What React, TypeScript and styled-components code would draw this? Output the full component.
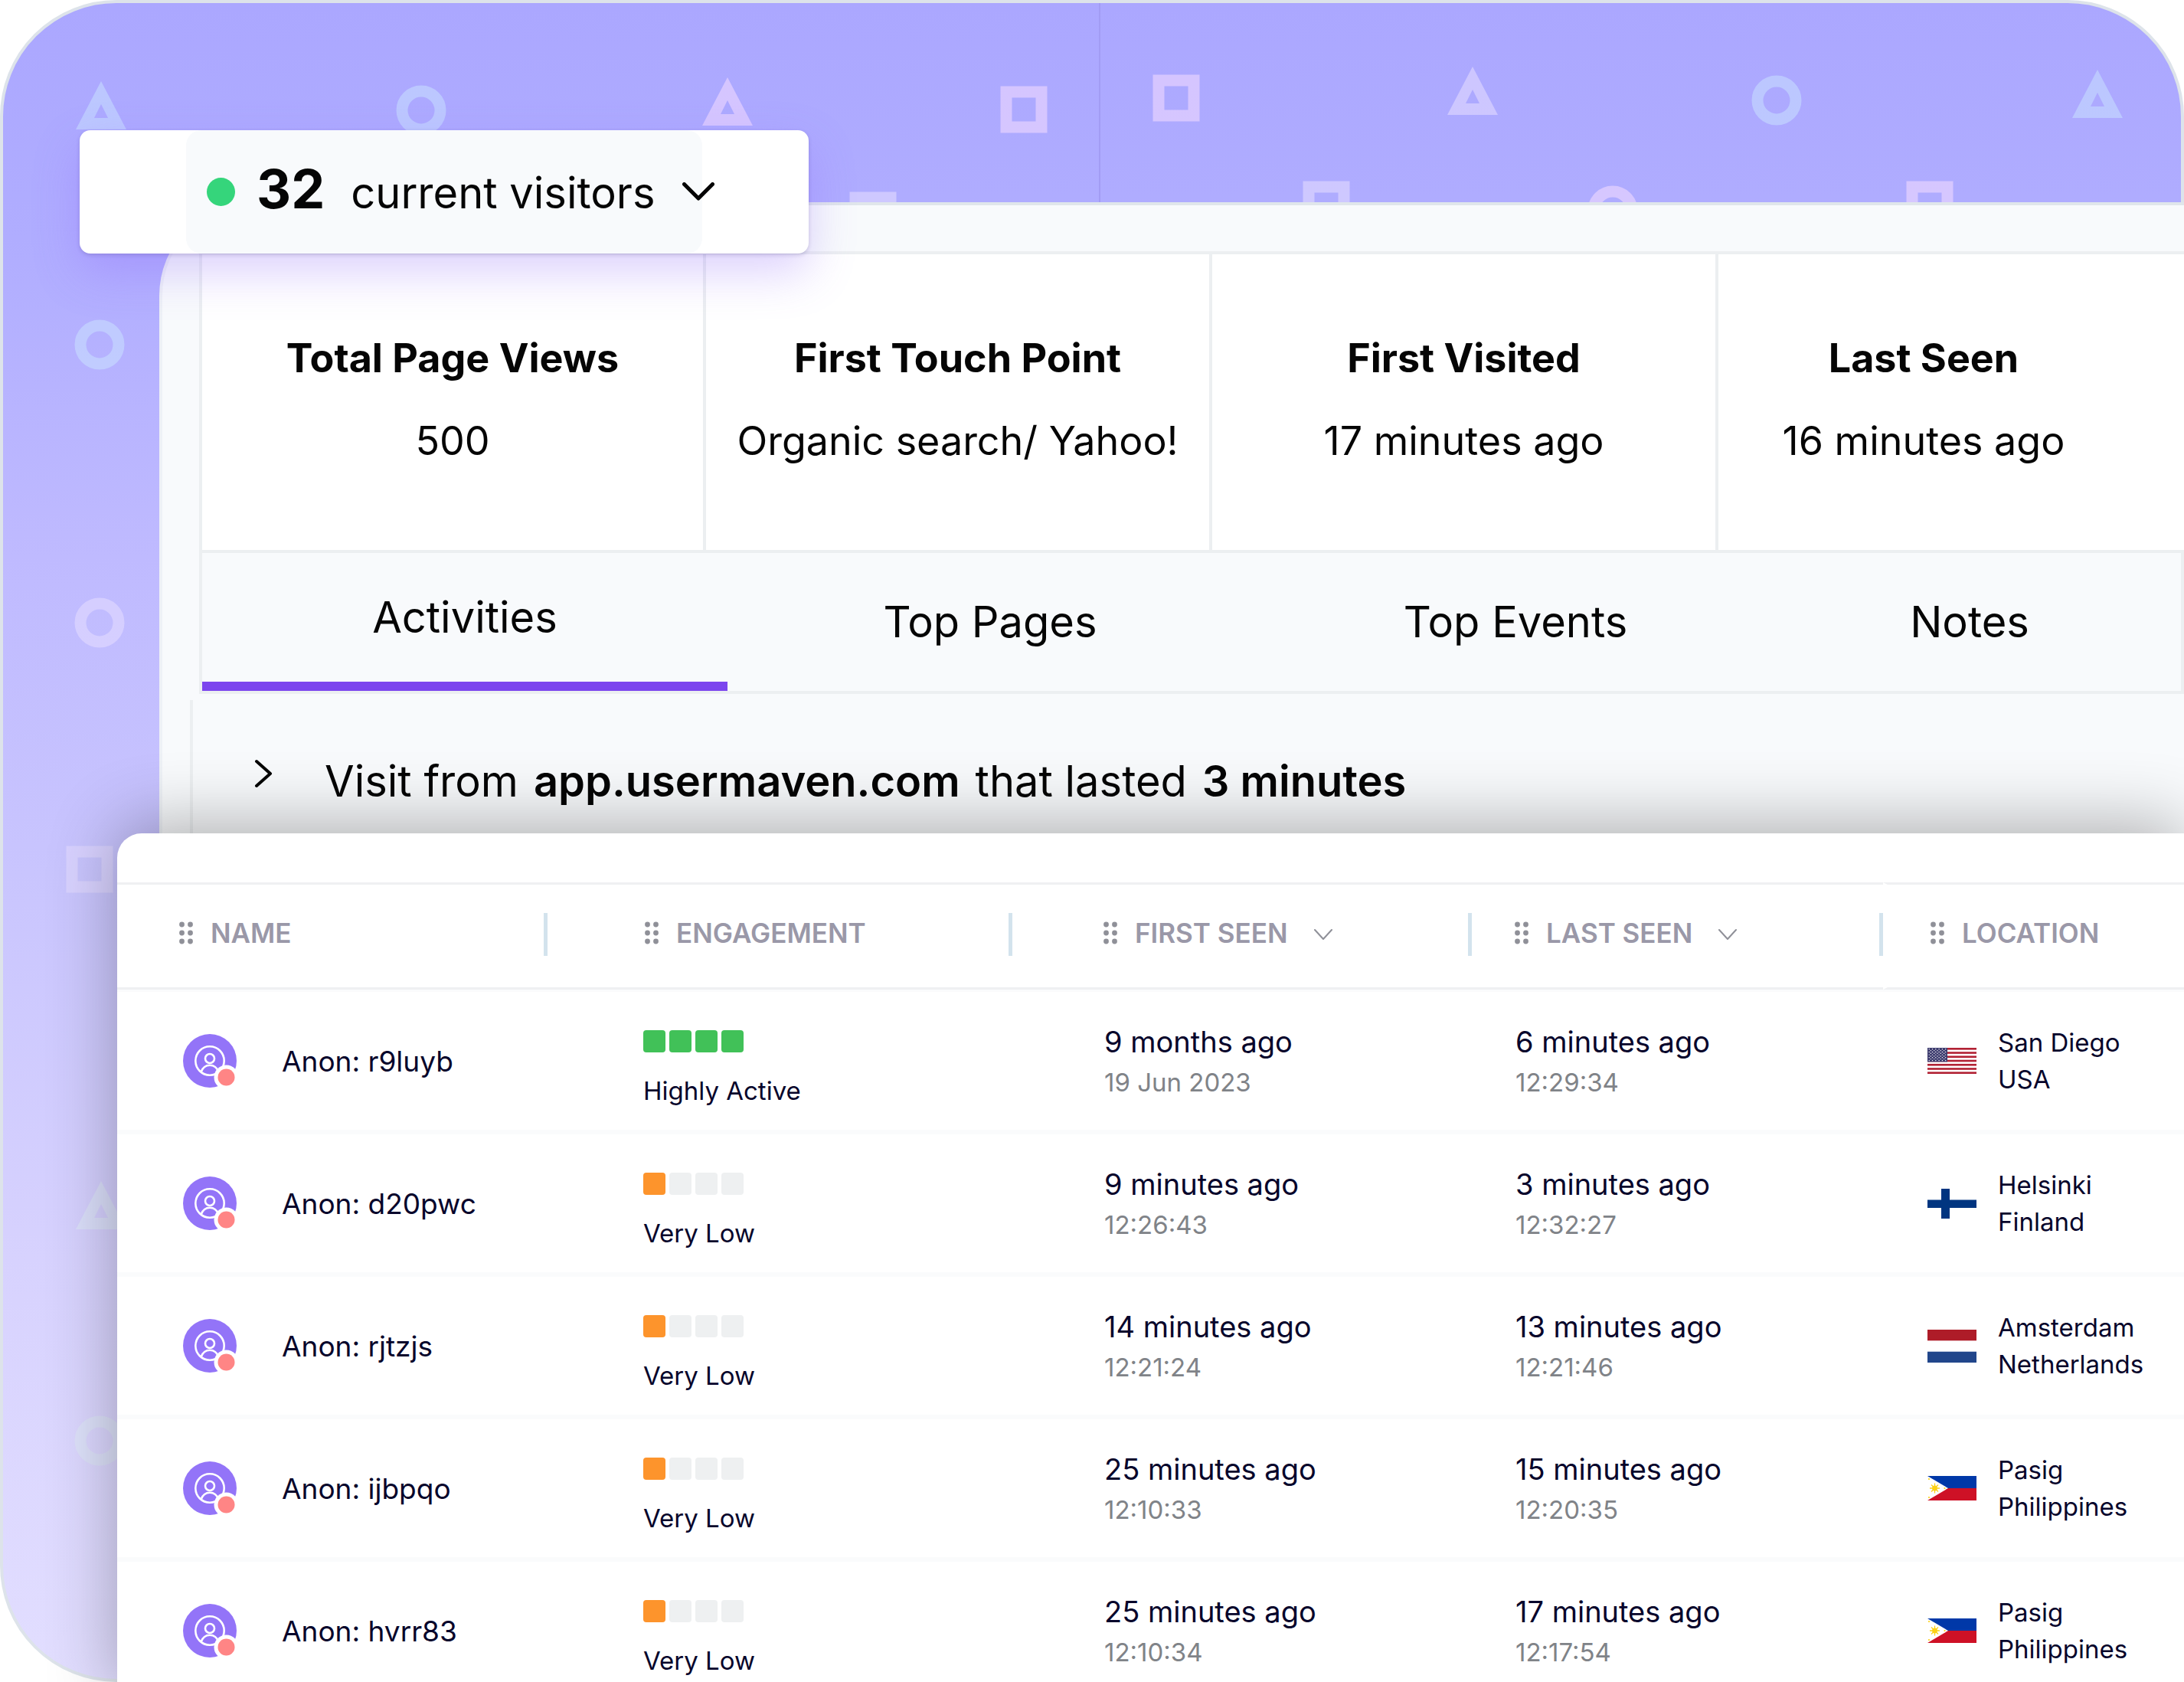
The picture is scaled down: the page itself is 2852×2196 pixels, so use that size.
import React from "react";
import styled, { createGlobalStyle, css } from "styled-components";

const GlobalStyle = createGlobalStyle`
  *, *::before, *::after { box-sizing: border-box; }
  body {
    margin: 0;
    background: #ffffff;
    color: #050505;
    font-family: Inter, "Liberation Sans", sans-serif;
    font-optical-sizing: none;
  }
  button { font: inherit; color: inherit; border: 0; background: none; padding: 0; cursor: pointer; }
`;

/* ---------- stage ---------- */

const Stage = styled.main`
  position: relative;
  display: flex;
  flex-direction: column;
  height: 100vh;
  overflow: hidden;
`;

const Backdrop = styled.div`
  position: absolute;
  inset: 0;
  overflow: hidden;
  border: 4px solid #dde3ea;
  border-radius: 152px 152px 0 152px;
  background: linear-gradient(180deg, #aba7ff 0%, #b0adff 14%, #bfbaff 33%, #c9c5fe 52%, #d7d2fe 75%, #e2deff 100%);
`;

const Pattern = styled.svg`
  position: absolute;
  top: -4px;
  left: -4px;
  width: 2852px;
  height: 2196px;
`;

const BLUE = "rgba(204, 229, 255, 0.5)";
const PINK = "rgba(240, 217, 255, 0.6)";
const LILAC = "rgba(226, 219, 255, 0.6)";
const MIST = "rgba(222, 232, 246, 0.6)";

type ShapeProps = { x: number; y: number; fill: string };

const Triangle = ({ x, y, fill }: ShapeProps) => (
  <path
    transform={`translate(${x} ${y})`}
    fill={fill}
    fillRule="evenodd"
    d="M0-32 33 31H-33ZM0-2-9 16H9Z"
  />
);
const Ring = ({ x, y, fill }: ShapeProps) => (
  <circle cx={x} cy={y} r="25" fill="none" stroke={fill} strokeWidth="15" />
);
const Square = ({ x, y, fill }: ShapeProps) => (
  <rect x={x - 23} y={y - 23} width="46" height="46" fill="none" stroke={fill} strokeWidth="15" />
);

const BackdropPattern = () => (
  <Pattern viewBox="0 0 2852 2196" aria-hidden="true">
    <path d="M1436 0V270" stroke="#a29cf4" strokeWidth="2" />
    <Triangle x={132} y={138} fill={BLUE} />
    <Ring x={550} y={144} fill={BLUE} />
    <Triangle x={950} y={133} fill={PINK} />
    <Square x={1337} y={143} fill={PINK} />
    <Square x={1536} y={128} fill={PINK} />
    <Triangle x={1923} y={119} fill={LILAC} />
    <Ring x={2320} y={131} fill={BLUE} />
    <Triangle x={2739} y={123} fill={BLUE} />
    <Square x={1140} y={281} fill={LILAC} />
    <Square x={1732} y={267} fill={LILAC} />
    <Ring x={2106} y={275} fill={PINK} />
    <Square x={2520} y={267} fill={PINK} />
    <Ring x={130} y={450} fill={BLUE} />
    <Ring x={130} y={813} fill={LILAC} />
    <Square x={117} y={1135} fill={LILAC} />
    <Triangle x={132} y={1574} fill={MIST} />
    <Ring x={130} y={1881} fill={MIST} />
  </Pattern>
);

/* ---------- current visitors ---------- */

const VisitorsButton = styled.button`
  && {
    position: absolute;
    top: 170px;
    left: 104px;
    z-index: 2;
    display: flex;
    align-items: center;
    width: 952px;
    height: 161px;
    padding-left: 166px;
    border-radius: 14px;
    background: #ffffff;
    box-shadow: 0 2px 5px rgba(60, 50, 110, 0.2), 0 24px 60px rgba(140, 100, 250, 0.3);
  }
  &::before {
    content: "";
    position: absolute;
    inset: 0 139px;
    border-radius: 20px;
    background: #f8fafc;
  }
  > * { position: relative; }
`;

const LiveDot = styled.span`
  width: 37px;
  height: 37px;
  margin-right: 28px;
  border-radius: 50%;
  background: #35d57b;
`;

const VisitorsText = styled.span`
  display: flex;
  align-items: baseline;
  gap: 34px;
  margin-right: 36px;
  font-size: 56px;
  line-height: 80px;
  padding-bottom: 2px;
  white-space: nowrap;
  strong { font-size: 70px; font-weight: 700; }
`;

/* ---------- visitor profile ---------- */

const ProfilePanel = styled.section`
  position: relative;
  margin: 264px 0 0 208px;
  padding: 60px 0 0 36px;
  border: solid #e0e6eb;
  border-width: 4px 0 0 4px;
  border-left-color: #eef1f6;
  border-radius: 122px 0 0 0;
  background: #f8fafc;
`;

const line = "4px solid #eceff1";

const Stats = styled.dl`
  display: grid;
  grid-template-columns: 658fr 661fr 661fr 612fr;
  margin: 0 0 0 12px;
  border-top: ${line};
  border-bottom: ${line};
  background: #ffffff;
`;

const Stat = styled.div`
  display: flex;
  flex-direction: column;
  align-items: center;
  gap: 44px;
  padding: 104px 0 110px;
  border-left: ${line};
  text-align: center;
  &:last-child { padding-right: 72px; }
`;

const StatTitle = styled.dt`
  font-size: 52px;
  font-weight: 700;
  line-height: 64px;
  white-space: nowrap;
`;

const StatValue = styled.dd`
  margin: 0;
  font-size: 52px;
  line-height: 64px;
  white-space: nowrap;
`;

const Tabs = styled.div`
  display: grid;
  grid-template-columns: 686fr 686fr 686fr 500fr;
  margin: 0 0 8px 12px;
  padding-right: 26px;
  border: ${line};
  border-top: 0;
`;

const Tab = styled.button<{ $active?: boolean }>`
  && {
    height: 180px;
    font-size: 56px;
    ${(p) => p.$active && css`border-bottom: 12px solid #7c45ee;`}
  }
`;

const Session = styled.div`
  display: flex;
  align-items: flex-start;
  gap: 58px;
  padding: 74px 0 36px 70px;
  border-left: ${line};
`;

const SessionToggle = styled.button`
  width: 44px;
  height: 44px;
  svg { display: block; }
`;

const SessionText = styled.p`
  display: flex;
  gap: 20px;
  margin: 0;
  font-size: 56px;
  line-height: 64px;
  white-space: nowrap;
  strong { font-weight: 600; }
`;

/* ---------- visitors table ---------- */

const TablePanel = styled.section`
  position: relative;
  flex: none;
  margin-left: 153px;
  padding-top: 64px;
  border-radius: 32px 0 0 0;
  background: #ffffff;
  box-shadow: 0 -12px 90px rgba(0, 0, 0, 0.3);
`;

const Table = styled.table`
  width: 100%;
  table-layout: fixed;
  border-collapse: separate;
  border-spacing: 0;
  color: #07052b;
  text-align: left;
`;

const HeadCell = styled.th<{ $pad: number }>`
  padding: 37px 0 41px ${(p) => p.$pad}px;
  border-top: 3px solid #eff0f2;
  border-bottom: 3px solid #eff0f2;
  &:last-child { border-left: 6px solid #ffffff; }
`;

const HeadContent = styled.div<{ $divider: boolean }>`
  display: flex;
  align-items: center;
  height: 56px;
  padding-bottom: 4px;
  border-right: ${(p) => (p.$divider ? "5px solid #d3e3ed" : "0")};
  color: #9a98a8;
  font-size: 35px;
  font-weight: 600;
  white-space: nowrap;
`;

const Grip = styled.svg`
  flex: none;
  width: 18px;
  height: 30px;
  margin-right: 23px;
`;

const SortButton = styled.button`
  margin-left: 34px;
  padding-top: 4px;
  svg { display: block; }
`;

const Cell = styled.td<{ $pad: number }>`
  height: 186px;
  padding: 0 0 0 ${(p) => p.$pad}px;
  border-top: 3px solid #fafbfc;
  border-bottom: 3px solid #fafbfc;
  vertical-align: middle;
  white-space: nowrap;
`;

const Person = styled.div`
  display: flex;
  align-items: center;
  gap: 55px;
  font-size: 37px;
`;

const Engagement = styled.div`
  display: flex;
  flex-direction: column;
  gap: 30px;
  padding-top: 18px;
  font-size: 33px;
  line-height: 40px;
`;

const Meter = styled.div`
  display: flex;
  gap: 5px;
`;

const Block = styled.span<{ $color: string }>`
  width: 29px;
  height: 29px;
  border-radius: 4px;
  background: ${(p) => p.$color};
`;

const When = styled.div`
  font-size: 38px;
  line-height: 56px;
`;

const Stamp = styled.div`
  color: #808388;
  font-size: 33px;
  line-height: 50px;
`;

const Place = styled.div`
  display: flex;
  align-items: center;
  gap: 28px;
  font-size: 33px;
  line-height: 48px;
  svg { flex: none; }
`;

/* ---------- drawings ---------- */

const Chevron = ({ w, h, stroke, color }: { w: number; h: number; stroke: number; color: string }) => (
  <svg width={w} height={h} viewBox={`0 0 ${w} ${h}`} fill="none" aria-hidden="true">
    <path
      d={`M${stroke / 2} ${stroke / 2}L${w / 2} ${h - stroke}L${w - stroke / 2} ${stroke / 2}`}
      stroke={color}
      strokeWidth={stroke}
      strokeLinecap="round"
      strokeLinejoin="round"
    />
  </svg>
);

const GripDots = () => (
  <Grip viewBox="0 0 18 30" fill="#8f9098" aria-hidden="true">
    {[4, 15, 26].map((y) => (
      <React.Fragment key={y}>
        <circle cx="3.5" cy={y} r="3.4" />
        <circle cx="14.5" cy={y} r="3.4" />
      </React.Fragment>
    ))}
  </Grip>
);

const Avatar = () => (
  <svg width="74" height="74" viewBox="0 0 74 74" fill="none" aria-hidden="true">
    <circle cx="35" cy="37" r="35" fill="#9374f8" />
    <g stroke="#fff" strokeWidth="2.6">
      <circle cx="35" cy="37" r="18.7" />
      <circle cx="35" cy="34" r="6" />
      <path d="M23.500 51.500C26 45 30 42.700 35 42.700S44 45 46.500 51.500" />
    </g>
    <circle cx="56.500" cy="58.500" r="16" fill="#fff" />
    <circle cx="56.500" cy="58.500" r="11" fill="#ff8585" />
  </svg>
);

const FlagUS = () => (
  <svg width="64" height="34" viewBox="0 0 64 34" role="img" aria-label="Flag of the USA">
    <rect width="64" height="34" fill="#fff" />
    {[0, 1, 2, 3, 4, 5, 6].map((i) => (
      <rect key={i} y={(i * 68) / 13} width="64" height={34 / 13} fill="#b22234" />
    ))}
    <rect width="26" height={(34 * 7) / 13} fill="#3c3b6e" />
    {[0, 1, 2, 3, 4, 5, 6, 7, 8].map((r) =>
      (r % 2 ? [0, 1, 2, 3, 4] : [0, 1, 2, 3, 4, 5]).map((c) => (
        <circle key={`${r}-${c}`} cx={(r % 2 ? 4.4 : 2.2) + c * 4.3} cy={1.8 + r * 1.83} r="0.7" fill="#fff" />
      ))
    )}
  </svg>
);

const FlagFI = () => (
  <svg width="64" height="39" viewBox="0 0 64 39" role="img" aria-label="Flag of Finland">
    <path d="M0 14.500H18V0H29V14.500H64V25H29V39H18V25H0Z" fill="#003580" />
  </svg>
);

const FlagNL = () => (
  <svg width="64" height="43" viewBox="0 0 64 43" role="img" aria-label="Flag of the Netherlands">
    <rect width="64" height="14.300" fill="#ae1c28" />
    <rect y="28.700" width="64" height="14.300" fill="#21468b" />
  </svg>
);

const FlagPH = () => (
  <svg width="64" height="32" viewBox="0 0 64 32" role="img" aria-label="Flag of the Philippines">
    <rect width="64" height="16" fill="#0038a8" />
    <rect y="16" width="64" height="16" fill="#ce1126" />
    <path d="M0 0 27 16 0 32Z" fill="#fff" />
    <g stroke="#fcd116" strokeWidth="1.3">
      <path d="M9.500 9.500V22.500M3 16H16M5 11.500 14 20.500M14 11.500 5 20.500" />
    </g>
    <circle cx="9.500" cy="16" r="3.400" fill="#fcd116" />
    <g fill="#fcd116">
      <circle cx="2" cy="4" r="1.100" />
      <circle cx="2" cy="28" r="1.100" />
      <circle cx="22.500" cy="16" r="1.100" />
    </g>
  </svg>
);

/* ---------- data ---------- */

const stats = [
  ["Total Page Views", "500"],
  ["First Touch Point", "Organic search/ Yahoo!"],
  ["First Visited", "17 minutes ago"],
  ["Last Seen", "16 minutes ago"],
];

const tabs = ["Activities", "Top Pages", "Top Events", "Notes"];

const columns = [
  { label: "NAME", width: "562px", head: 81, body: 86, sort: false },
  { label: "ENGAGEMENT", width: "607px", head: 127, body: 125, sort: false },
  { label: "FIRST SEEN", width: "600px", head: 119, body: 120, sort: true },
  { label: "LAST SEEN", width: "537px", head: 56, body: 57, sort: true },
  { label: "LOCATION", width: "auto", head: 56, body: 58, sort: false },
];

const rows = [
  { name: "r9luyb", level: 4, first: ["9 months ago", "19 Jun 2023"], last: ["6 minutes ago", "12:29:34"], place: ["San Diego", "USA"], Flag: FlagUS },
  { name: "d20pwc", level: 1, first: ["9 minutes ago", "12:26:43"], last: ["3 minutes ago", "12:32:27"], place: ["Helsinki", "Finland"], Flag: FlagFI },
  { name: "rjtzjs", level: 1, first: ["14 minutes ago", "12:21:24"], last: ["13 minutes ago", "12:21:46"], place: ["Amsterdam", "Netherlands"], Flag: FlagNL },
  { name: "ijbpqo", level: 1, first: ["25 minutes ago", "12:10:33"], last: ["15 minutes ago", "12:20:35"], place: ["Pasig", "Philippines"], Flag: FlagPH },
  { name: "hvrr83", level: 1, first: ["25 minutes ago", "12:10:34"], last: ["17 minutes ago", "12:17:54"], place: ["Pasig", "Philippines"], Flag: FlagPH },
];

const blockColor = (level: number, i: number) =>
  i >= level ? "#eef0f1" : level === 4 ? "#41c158" : "#fd942c";

export default function App() {
  return (
    <>
      <GlobalStyle />
      <Stage>
        <Backdrop>
          <BackdropPattern />
        </Backdrop>

        <VisitorsButton type="button">
          <LiveDot />
          <VisitorsText>
            <strong>32</strong>
            <span>current visitors</span>
          </VisitorsText>
          <Chevron w={42} h={26} stroke={5} color="#050505" />
        </VisitorsButton>

        <ProfilePanel>
          <Stats>
            {stats.map(([title, value]) => (
              <Stat key={title}>
                <StatTitle>{title}</StatTitle>
                <StatValue>{value}</StatValue>
              </Stat>
            ))}
          </Stats>
          <Tabs role="tablist">
            {tabs.map((tab, i) => (
              <Tab key={tab} type="button" role="tab" aria-selected={i === 0} $active={i === 0}>
                {tab}
              </Tab>
            ))}
          </Tabs>
          <Session>
            <SessionToggle type="button" aria-label="Expand visit">
              <svg width="44" height="44" viewBox="0 0 44 44" fill="none" aria-hidden="true">
                <path d="M13 6 31 22 13 38" stroke="#050505" strokeWidth="4" strokeLinecap="round" strokeLinejoin="round" />
              </svg>
            </SessionToggle>
            <SessionText>
              <span>Visit from</span>
              <strong>app.usermaven.com</strong>
              <span>that lasted</span>
              <strong>3 minutes</strong>
            </SessionText>
          </Session>
        </ProfilePanel>

        <TablePanel>
          <Table>
            <colgroup>
              {columns.map((c) => (
                <col key={c.label} style={{ width: c.width }} />
              ))}
            </colgroup>
            <thead>
              <tr>
                {columns.map((c, i) => (
                  <HeadCell key={c.label} scope="col" $pad={c.head}>
                    <HeadContent $divider={i < columns.length - 1}>
                      <GripDots />
                      {c.label}
                      {c.sort && (
                        <SortButton type="button" aria-label={`Sort by ${c.label.toLowerCase()}`}>
                          <Chevron w={24} h={15} stroke={2} color="#8f9098" />
                        </SortButton>
                      )}
                    </HeadContent>
                  </HeadCell>
                ))}
              </tr>
            </thead>
            <tbody>
              {rows.map((row) => (
                <tr key={row.name}>
                  <Cell $pad={columns[0].body}>
                    <Person>
                      <Avatar />
                      <span>Anon: {row.name}</span>
                    </Person>
                  </Cell>
                  <Cell $pad={columns[1].body}>
                    <Engagement>
                      <Meter>
                        {[0, 1, 2, 3].map((i) => (
                          <Block key={i} $color={blockColor(row.level, i)} />
                        ))}
                      </Meter>
                      {row.level === 4 ? "Highly Active" : "Very Low"}
                    </Engagement>
                  </Cell>
                  <Cell $pad={columns[2].body}>
                    <When>{row.first[0]}</When>
                    <Stamp>{row.first[1]}</Stamp>
                  </Cell>
                  <Cell $pad={columns[3].body}>
                    <When>{row.last[0]}</When>
                    <Stamp>{row.last[1]}</Stamp>
                  </Cell>
                  <Cell $pad={columns[4].body}>
                    <Place>
                      <row.Flag />
                      <div>
                        {row.place[0]}
                        <br />
                        {row.place[1]}
                      </div>
                    </Place>
                  </Cell>
                </tr>
              ))}
            </tbody>
          </Table>
        </TablePanel>
      </Stage>
    </>
  );
}
